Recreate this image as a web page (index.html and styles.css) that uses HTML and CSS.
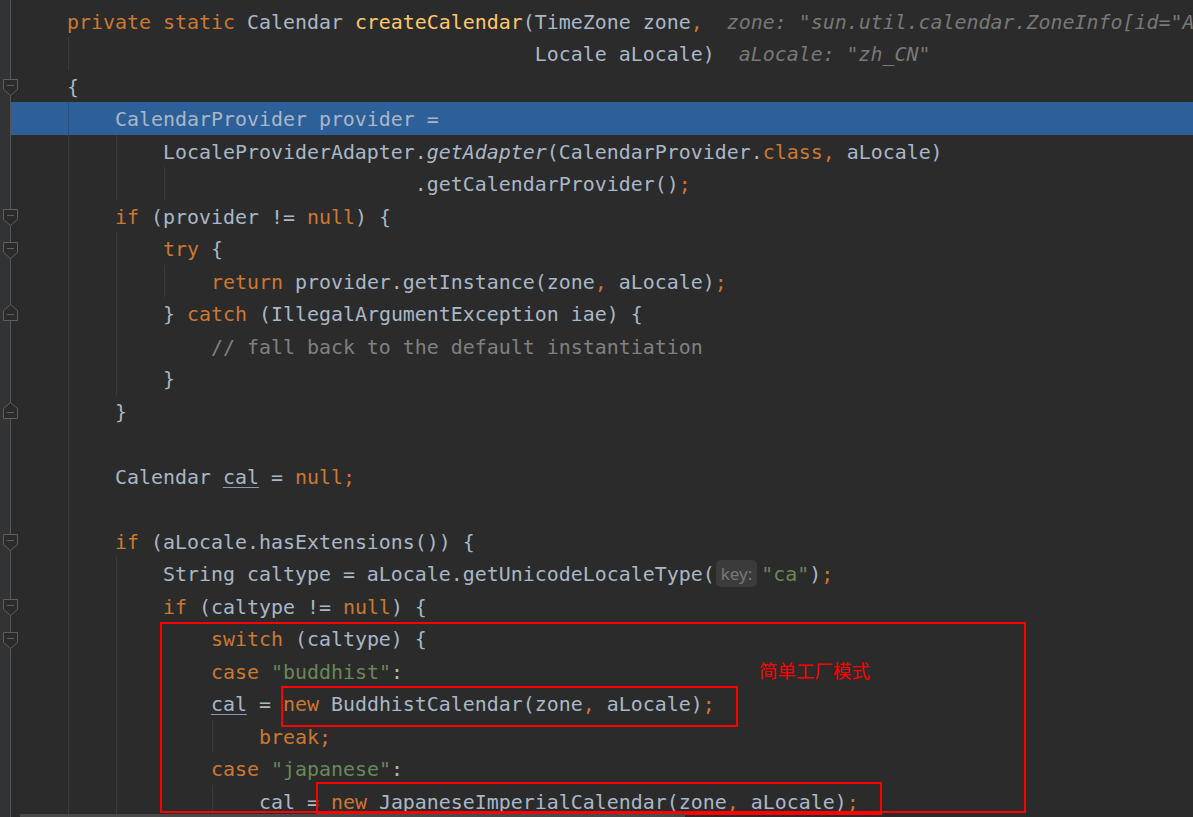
FILE: index.html
```html
<!DOCTYPE html>
<html lang="zh-CN">
<head>
<meta charset="utf-8">
<title>createCalendar</title>
<link rel="stylesheet" href="styles.css">
</head>
<body>
<div class="ide">
  <div class="gutter">
    <div class="grow"></div>
    <div class="grow"></div>
    <div class="grow"><svg class="fold down" width="15" height="17" viewBox="0 0 15 17"><path d="M0.5 0.5H14.5V10.5L7.5 16.5L0.5 10.5Z"/><path d="M4 6.5H11"/></svg></div>
    <div class="grow"></div>
    <div class="grow"></div>
    <div class="grow"></div>
    <div class="grow"><svg class="fold down" width="15" height="17" viewBox="0 0 15 17"><path d="M0.5 0.5H14.5V10.5L7.5 16.5L0.5 10.5Z"/><path d="M4 6.5H11"/></svg></div>
    <div class="grow"><svg class="fold down" width="15" height="17" viewBox="0 0 15 17"><path d="M0.5 0.5H14.5V10.5L7.5 16.5L0.5 10.5Z"/><path d="M4 6.5H11"/></svg></div>
    <div class="grow"></div>
    <div class="grow"><svg class="fold up" width="15" height="17" viewBox="0 0 15 17"><path d="M7.5 0.5L14.5 6.5V16.5H0.5V6.5Z"/><path d="M4 10.5H11"/></svg></div>
    <div class="grow"></div>
    <div class="grow"></div>
    <div class="grow"><svg class="fold up" width="15" height="17" viewBox="0 0 15 17"><path d="M7.5 0.5L14.5 6.5V16.5H0.5V6.5Z"/><path d="M4 10.5H11"/></svg></div>
    <div class="grow"></div>
    <div class="grow"></div>
    <div class="grow"></div>
    <div class="grow"><svg class="fold down" width="15" height="17" viewBox="0 0 15 17"><path d="M0.5 0.5H14.5V10.5L7.5 16.5L0.5 10.5Z"/><path d="M4 6.5H11"/></svg></div>
    <div class="grow"></div>
    <div class="grow"><svg class="fold down" width="15" height="17" viewBox="0 0 15 17"><path d="M0.5 0.5H14.5V10.5L7.5 16.5L0.5 10.5Z"/><path d="M4 6.5H11"/></svg></div>
    <div class="grow"><svg class="fold down" width="15" height="17" viewBox="0 0 15 17"><path d="M0.5 0.5H14.5V10.5L7.5 16.5L0.5 10.5Z"/><path d="M4 6.5H11"/></svg></div>
    <div class="grow"></div>
    <div class="grow"></div>
    <div class="grow"></div>
    <div class="grow"></div>
    <div class="grow"></div>
  </div>
  <div class="editor">
<div class="ln"><span class="k">private static </span>Calendar <span class="f">createCalendar</span>(TimeZone zone<span class="k">,</span>  <span class="h">zone: "sun.util.calendar.ZoneInfo[id="A</span></div>
<div class="ln"><span class="g">    </span>                                   Locale aLocale)  <span class="h">aLocale: "zh_CN"</span></div>
<div class="ln">{</div>
<div class="ln cur"><span class="g">    </span>CalendarProvider provider =</div>
<div class="ln"><span class="g">    </span><span class="g">    </span>LocaleProviderAdapter.<span class="i">getAdapter</span>(CalendarProvider.<span class="k">class,</span> aLocale)</div>
<div class="ln"><span class="g">    </span><span class="g">    </span><span class="g">    </span>                 .getCalendarProvider()<span class="k">;</span></div>
<div class="ln"><span class="g">    </span><span class="k">if</span> (provider != <span class="k">null</span>) {</div>
<div class="ln"><span class="g">    </span><span class="g">    </span><span class="k">try</span> {</div>
<div class="ln"><span class="g">    </span><span class="g">    </span><span class="g">    </span><span class="k">return</span> provider.getInstance(zone<span class="k">,</span> aLocale)<span class="k">;</span></div>
<div class="ln"><span class="g">    </span><span class="g">    </span>} <span class="k">catch</span> (IllegalArgumentException iae) {</div>
<div class="ln"><span class="g">    </span><span class="g">    </span>    <span class="c">// fall back to the default instantiation</span></div>
<div class="ln"><span class="g">    </span><span class="g">    </span>}</div>
<div class="ln"><span class="g">    </span>}</div>
<div class="ln"><span class="g">    </span></div>
<div class="ln"><span class="g">    </span>Calendar <span class="u">cal</span> = <span class="k">null;</span></div>
<div class="ln"><span class="g">    </span></div>
<div class="ln"><span class="g">    </span><span class="k">if</span> (aLocale.hasExtensions()) {</div>
<div class="ln"><span class="g">    </span><span class="g">    </span>String caltype = aLocale.getUnicodeLocaleType(<span class="inlay">key:</span><span class="s">"ca"</span>)<span class="k">;</span></div>
<div class="ln"><span class="g">    </span><span class="g">    </span><span class="k">if</span> (caltype != <span class="k">null</span>) {</div>
<div class="ln"><span class="g">    </span><span class="g">    </span>    <span class="k">switch</span> (caltype) {</div>
<div class="ln"><span class="g">    </span><span class="g">    </span>    <span class="k">case</span> <span class="s">"buddhist"</span>:</div>
<div class="ln"><span class="g">    </span><span class="g">    </span>    <span class="u">cal</span> = <span class="k">new</span> BuddhistCalendar(zone<span class="k">,</span> aLocale)<span class="k">;</span></div>
<div class="ln"><span class="g">    </span><span class="g">    </span>    <span class="g">    </span><span class="k">break;</span></div>
<div class="ln"><span class="g">    </span><span class="g">    </span>    <span class="k">case</span> <span class="s">"japanese"</span>:</div>
<div class="ln"><span class="g">    </span><span class="g">    </span>    <span class="g">    </span><span class="u">cal</span> = <span class="k">new</span> JapaneseImperialCalendar(zone<span class="k">,</span> aLocale)<span class="k">;</span></div>
  </div>
  <div class="mark mark-switch"></div>
  <div class="mark mark-buddhist"></div>
  <div class="mark mark-japanese"></div>
  <div class="note">简单工厂模式</div>
  <div class="hscroll"></div>
</div>
</body>
</html>
```

FILE: styles.css
```css
html, body {
  margin: 0;
  padding: 0;
  background: #2b2b2b;
  overflow: hidden;
}

.ide {
  position: relative;
  display: flex;
  width: 1193px;
  height: 817px;
  overflow: hidden;
  background: #2b2b2b;
}

.gutter {
  position: relative;
  z-index: 2;
  flex: 0 0 10px;
  width: 10px;
  background: #313335;
  border-right: 1px solid #555555;
  padding-top: 4.5px;
  display: flex;
  flex-direction: column;
}

.grow {
  height: 32.5px;
  flex: 0 0 32.5px;
  display: flex;
  align-items: flex-start;
}

.fold {
  flex: 0 0 15px;
  margin-left: 3px;
  fill: #2b2b2b;
  stroke: #5e5e5e;
  stroke-width: 1;
  overflow: visible;
}

.fold.down { margin-top: 9.5px; }
.fold.up { margin-top: 7px; }

.editor {
  flex: 1 1 auto;
  min-width: 0;
  padding-top: 4.5px;
  overflow: hidden;
  font-family: "DejaVu Sans Mono", "Liberation Mono", monospace;
  font-size: 19.93px;
  color: #a9b7c6;
}

.ln {
  height: 32.5px;
  line-height: 35px;
  padding-left: 56px;
  white-space: pre;
}

.ln.cur {
  background: #2d5f99;
}

.g {
  display: inline-block;
  height: 32.5px;
  vertical-align: top;
  background: linear-gradient(#3b3b3b, #3b3b3b) 1px 0 / 1px 100% no-repeat;
}

.cur .g {
  background-image: linear-gradient(#264f80, #264f80);
}

.k { color: #cc7832; }
.f { color: #ffc66d; }
.s { color: #6a8759; }
.c { color: #808080; }
.i { font-style: italic; }
.h { font-style: italic; color: #787878; }

.u {
  text-decoration: underline;
  text-decoration-color: #8a9aac;
  text-underline-offset: 3px;
  text-decoration-thickness: 1px;
}

.inlay {
  display: inline-block;
  vertical-align: top;
  height: 27px;
  line-height: 27px;
  margin: 3px 4px 0 1px;
  padding: 0 5px;
  border-radius: 5px;
  background: #3b3b3b;
  color: #787878;
  font-family: "Noto Sans", "Open Sans", sans-serif;
  font-size: 17px;
}

.mark {
  position: absolute;
  border: 2px solid #ff0000;
  box-sizing: border-box;
  pointer-events: none;
}

.mark-switch {
  left: 160px;
  top: 622px;
  width: 866px;
  height: 191px;
}

.mark-buddhist {
  left: 281px;
  top: 686px;
  width: 457px;
  height: 41px;
}

.mark-japanese {
  left: 316px;
  top: 782px;
  width: 566px;
  height: 33px;
}

.note {
  position: absolute;
  left: 759px;
  top: 657px;
  color: #ff0000;
  font-family: "Noto Sans CJK SC", sans-serif;
  font-size: 18.5px;
  line-height: 26px;
}

.hscroll {
  position: absolute;
  left: 20px;
  bottom: 0;
  width: 665px;
  height: 3px;
  background: #4a4a4a;
}
```
